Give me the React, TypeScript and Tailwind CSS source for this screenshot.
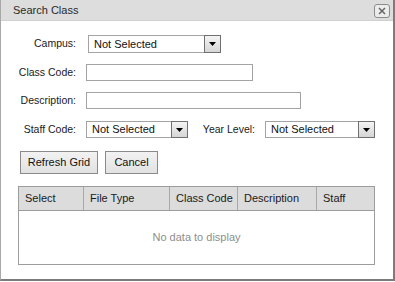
import React from "react";

function DropButton() {
  return (
    <div className="w-[17px] h-full border border-[#707070] bg-gradient-to-b from-[#f4f4f4] to-[#d6d6d6] flex items-center justify-center">
      <svg width="7" height="4" viewBox="0 0 7 4">
        <path d="M0 0H7L3.5 4Z" fill="#000" />
      </svg>
    </div>
  );
}

function Select({ w, h }: { w: string; h: string }) {
  return (
    <div className={`flex ${w} ${h}`}>
      <div className="flex-1 border border-r-0 border-[#a3a3a3] bg-white flex items-center pl-[5px] text-[11px] text-[#111] leading-none whitespace-nowrap">
        Not Selected
      </div>
      <DropButton />
    </div>
  );
}

function Label({ children, w = "w-[58px]" }: { children: React.ReactNode; w?: string }) {
  return (
    <div className={`${w} flex justify-end whitespace-nowrap text-[10.5px]`}>
      <span>{children}</span>
    </div>
  );
}

export default function App() {
  const font = { fontFamily: '"Liberation Sans", Arial, sans-serif' };
  return (
    <div
      style={font}
      className="w-[395px] h-[281px] bg-white border-l border-[#a8a8a8] border-r-2 border-b-2 border-r-[#7c7c7c] border-b-[#7c7c7c] flex flex-col text-[11px] text-[#1a1a1a]"
    >
      <div className="h-[21px] bg-[#dddddd] border-b border-[#d0d0d0] flex items-center justify-between pl-[12px]">
        <span className="text-[#2a2a2a]">Search Class</span>
        <div className="w-[16px] h-[14px] mr-[3px] mt-[1px] border border-[#8c8c8c] rounded-[3px] bg-[#ececec] flex items-center justify-center">
          <svg width="8" height="8" viewBox="0 0 8 8">
            <path d="M1 1L7 7M7 1L1 7" stroke="#666" strokeWidth="1.5" />
          </svg>
        </div>
      </div>

      <div className="pl-[17px] flex flex-col">
        <div className="mt-[14px] flex items-center">
          <Label>Campus:</Label>
          <div className="ml-[12px]">
            <Select w="w-[133px]" h="h-[18px]" />
          </div>
        </div>

        <div className="mt-[11px] flex items-center">
          <Label>Class Code:</Label>
          <div className="ml-[10px] w-[167px] h-[17px] border border-[#a3a3a3]" />
        </div>

        <div className="mt-[11px] flex items-center">
          <Label>Description:</Label>
          <div className="ml-[10px] w-[215px] h-[17px] border border-[#a3a3a3]" />
        </div>

        <div className="mt-[12px] flex items-center">
          <Label>Staff Code:</Label>
          <div className="ml-[10px]">
            <Select w="w-[102px]" h="h-[17px]" />
          </div>
          <div className="ml-[11px]">
            <Label w="w-[56px]">Year Level:</Label>
          </div>
          <div className="ml-[10px]">
            <Select w="w-[110px]" h="h-[17px]" />
          </div>
        </div>

        <div className="mt-[13px] ml-[2px] flex items-center gap-[7px]">
          <button className="w-[78px] h-[23px] border border-[#8a8a8a] bg-gradient-to-b from-[#f2f2f2] to-[#e2e2e2] text-[11px] text-[#111]">
            Refresh Grid
          </button>
          <button className="w-[53px] h-[23px] border border-[#8a8a8a] bg-gradient-to-b from-[#f2f2f2] to-[#e2e2e2] text-[11px] text-[#111]">
            Cancel
          </button>
        </div>

        <div className="mt-[12px] w-[357px] h-[79px] border border-[#9c9c9c] flex flex-col">
          <div className="h-[24px] bg-[#dcdcdc] border-b border-[#9c9c9c] grid grid-cols-[65px_86px_68px_79px_1fr]">
            <div className="border-r border-[#a8a8a8] flex items-center pl-[6px]">Select</div>
            <div className="border-r border-[#a8a8a8] flex items-center pl-[6px]">File Type</div>
            <div className="border-r border-[#a8a8a8] flex items-center pl-[6px]">Class Code</div>
            <div className="border-r border-[#a8a8a8] flex items-center pl-[6px]">Description</div>
            <div className="flex items-center pl-[6px]">Staff</div>
          </div>
          <div className="flex-1 flex items-center justify-center text-[#8e8e8e]">
            No data to display
          </div>
        </div>
      </div>
    </div>
  );
}
